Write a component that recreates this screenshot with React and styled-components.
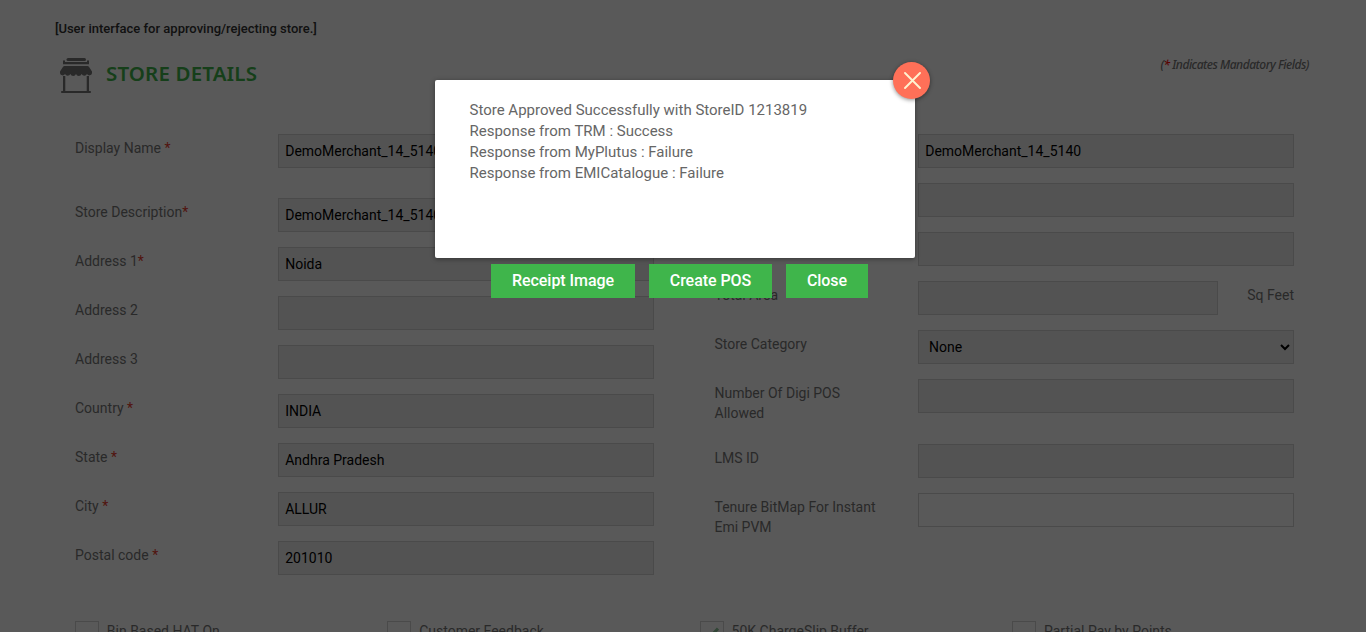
import React from 'react';
import styled, { createGlobalStyle } from 'styled-components';

const GlobalStyle = createGlobalStyle`
  * { box-sizing: border-box; }
  html, body { margin: 0; height: 632px; overflow: hidden; background: #fff; }
  body, input, select, button { font-family: Roboto, "Liberation Sans", sans-serif; font-size: 14px; }
`;

const Page = styled.div`
  height: 632px;
  overflow: hidden;
  padding: 19px 55px 0;
  color: #777;
`;

const Note = styled.p`
  margin: 0;
  font-size: 13px;
  font-weight: 500;
  line-height: 20px;
  color: #333;
`;

const Header = styled.header`
  display: flex;
  justify-content: space-between;
  height: 95px;
  padding: 16px 2px 0 5px;
`;

const Heading = styled.div`
  display: flex;
  align-items: flex-start;
  gap: 14px;
`;

const Title = styled.h1`
  margin: 3px 0 0;
  font-family: "Noto Sans", "Open Sans", sans-serif;
  font-size: 20.5px;
  font-weight: 600;
  line-height: 30px;
  letter-spacing: 0.15px;
  color: #3fb54b;
`;

const Mandatory = styled.span`
  font-family: "Noto Sans", "Open Sans", sans-serif;
  font-size: 12px;
  font-style: italic;
  font-weight: 500;
  line-height: 20px;
  letter-spacing: -0.5px;
`;

const Star = styled.span`
  color: ${(p) => (p.$dark ? '#f00' : '#e8392c')};
`;

const Columns = styled.div`
  display: flex;
  justify-content: space-between;
  padding: 0 17px 0 20px;
`;

const Column = styled.div`
  width: ${(p) => p.$width}px;
`;

const Row = styled.div`
  display: flex;
  height: ${(p) => p.$height || 49}px;
`;

const Label = styled.label`
  flex: 1;
  padding: 4px 30px 0 0;
  line-height: 20px;
`;

const Field = styled.input`
  width: ${(p) => p.$width || 376}px;
  height: 34px;
  padding: 0 6.2px;
  border: 1px solid #d5d5d5;
  border-radius: 0;
  outline: 0;
  background: ${(p) => (p.$open ? '#fff' : '#eee')};
  color: #000;
`;

const Select = styled.select`
  width: 376px;
  height: 34px;
  padding: 0 6px;
  border: 1px solid #d5d5d5;
  border-radius: 0;
  background: #eee;
  color: #000;
`;

const Unit = styled.span`
  width: 76px;
  padding-top: 4px;
  line-height: 20px;
  text-align: right;
`;

const Options = styled.div`
  display: grid;
  grid-template-columns: repeat(4, 312.4px);
  padding: 31px 0 0 19.8px;
`;

const Option = styled.label`
  display: flex;
  gap: 8px;
  line-height: 20px;
`;

const Box = styled.span`
  display: grid;
  place-items: center;
  width: 24px;
  height: 24px;
  border: 1px solid #d5d5d5;
`;

const Overlay = styled.div`
  position: absolute;
  inset: 0 0 auto;
  height: 632px;
  background: rgba(0, 0, 0, 0.65);
`;

const Dialog = styled.section`
  position: absolute;
  top: 80px;
  left: 435px;
  width: 480px;
`;

const Message = styled.div`
  height: 178px;
  padding: 20px 34.5px;
  border-radius: 2px;
  background: #fff;
  box-shadow: 0 1px 5px rgba(0, 0, 0, 0.4);
  color: #666;
  font-size: 15px;
  line-height: 21px;
`;

const Actions = styled.div`
  display: flex;
  gap: 14px;
  padding: 6px 0 0 56px;
`;

const Action = styled.button`
  width: ${(p) => p.$width}px;
  height: 34px;
  padding: 0 0 2px;
  border: 0;
  background: #3fb54b;
  color: #fff;
  font-size: 16px;
  font-weight: 500;
  letter-spacing: -0.05px;
`;

const Dismiss = styled.button`
  position: absolute;
  top: -18px;
  right: -15px;
  display: grid;
  place-items: center;
  width: 37px;
  height: 37px;
  padding: 0 0 0 2px;
  border: 0;
  border-radius: 50%;
  background: #ff7058;
  box-shadow: 0 1px 4px rgba(0, 0, 0, 0.45);
`;

const StoreIcon = () => (
  <svg width="32" height="38" viewBox="0 0 32 38" fill="#777">
    <rect x="6.5" y="3" width="19.5" height="3" rx="1.5" />
    <path d="M3 6q0-.8 1-.8t1 .8v1h22V6q0-.8 1-.8t1 .8v3.200H3z" />
    <path d="M4.500 11h23q1 0 1.600 1L32 16.500v1.700a2.700 2.700 0 0 1-5 .8 3 3 0 0 1-5.400 0 3 3 0 0 1-5.600 0 3 3 0 0 1-5.600 0 3 3 0 0 1-5.400 0A2.700 2.700 0 0 1 0 18.200v-1.700L2.900 12q.6-1 1.600-1z" />
    <path d="M3 21h2.300v15h21.400V21H29v15h1.200q.8 0 .8 1t-.8 1H1.800q-.8 0-.8-1t.8-1H3z" />
  </svg>
);

const left = [
  ['Display Name ', true, 'DemoMerchant_14_5140', 64],
  ['Store Description', true, 'DemoMerchant_14_5140'],
  ['Address 1', true, 'Noida'],
  ['Address 2', false, ''],
  ['Address 3', false, ''],
  ['Country ', true, 'INDIA'],
  ['State ', true, 'Andhra Pradesh'],
  ['City ', true, 'ALLUR'],
  ['Postal code ', true, '201010'],
];

const options = [
  ['Bin Based HAT On', false],
  ['Customer Feedback', false],
  ['50K ChargeSlip Buffer', true],
  ['Partial Pay by Points', false],
];

export default function App() {
  return (
    <>
      <GlobalStyle />
      <Page>
        <Note>[User interface for approving/rejecting store.]</Note>
        <Header>
          <Heading>
            <StoreIcon />
            <Title>STORE DETAILS</Title>
          </Heading>
          <Mandatory>(<Star $dark>*</Star> Indicates Mandatory Fields)</Mandatory>
        </Header>
        <Columns>
          <Column $width={579}>
            {left.map(([label, required, value, height]) => (
              <Row key={label} $height={height}>
                <Label>{label}{required && <Star>*</Star>}</Label>
                <Field readOnly value={value} />
              </Row>
            ))}
          </Column>
          <Column $width={579.5}>
            <Row><Label /><Field readOnly value="DemoMerchant_14_5140" /></Row>
            <Row><Label /><Field readOnly /></Row>
            <Row><Label /><Field readOnly /></Row>
            <Row>
              <Label>Total Area</Label>
              <Field readOnly $width={300} />
              <Unit>Sq Feet</Unit>
            </Row>
            <Row>
              <Label>Store Category</Label>
              <Select><option>None</option></Select>
            </Row>
            <Row $height={65}><Label>Number Of Digi POS Allowed</Label><Field readOnly /></Row>
            <Row><Label>LMS ID</Label><Field readOnly /></Row>
            <Row><Label>Tenure BitMap For Instant Emi PVM</Label><Field $open /></Row>
          </Column>
        </Columns>
        <Options>
          {options.map(([label, checked]) => (
            <Option key={label}>
              <Box>
                {checked && (
                  <svg width="14" height="12" viewBox="0 0 14 12" fill="none" stroke="#8fc79a" strokeWidth="3">
                    <path d="M1 6l4 4 8-8.500" />
                  </svg>
                )}
              </Box>
              {label}
            </Option>
          ))}
        </Options>
      </Page>
      <Overlay />
      <Dialog>
        <Message>
          <div>Store Approved Successfully with StoreID 1213819</div>
          <div>Response from TRM : Success</div>
          <div>Response from MyPlutus : Failure</div>
          <div>Response from EMICatalogue : Failure</div>
        </Message>
        <Actions>
          <Action $width={144}>Receipt Image</Action>
          <Action $width={123}>Create POS</Action>
          <Action $width={82}>Close</Action>
        </Actions>
        <Dismiss aria-label="Close">
          <svg width="17" height="17" viewBox="0 0 17 17" stroke="#fff3d0" strokeWidth="1.9" strokeLinecap="round">
            <path d="M1 1l15 15M16 1L1 16" />
          </svg>
        </Dismiss>
      </Dialog>
    </>
  );
}
